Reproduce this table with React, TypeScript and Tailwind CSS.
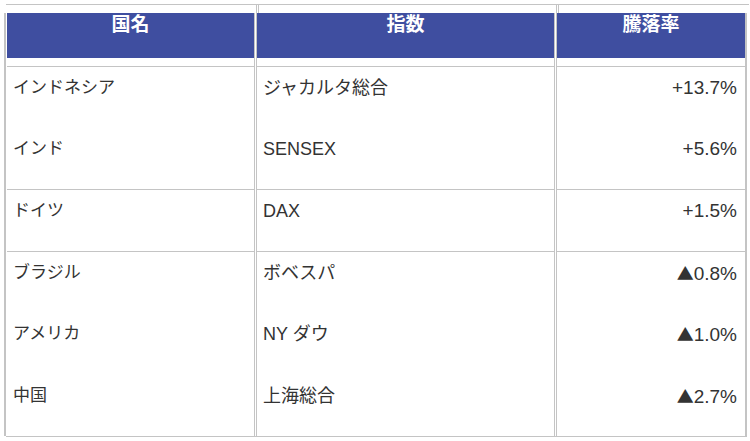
import React from 'react'

const line = 'border-[#c4c4c4]'

type Row = { country: string; index: string; rate: string; top: boolean }

const rows: Row[] = [
    { country: 'インドネシア', index: 'ジャカルタ総合', rate: '+13.7%', top: true },
    { country: 'インド', index: 'SENSEX', rate: '+5.6%', top: false },
    { country: 'ドイツ', index: 'DAX', rate: '+1.5%', top: true },
    { country: 'ブラジル', index: 'ボベスパ', rate: '▲0.8%', top: true },
    { country: 'アメリカ', index: 'NY ダウ', rate: '▲1.0%', top: false },
    { country: '中国', index: '上海総合', rate: '▲2.7%', top: false },
]

function Frame({
    edges = true,
    className = '',
    c1,
    c2,
    c3,
}: {
    edges?: boolean
    className?: string
    c1?: React.ReactNode
    c2?: React.ReactNode
    c3?: React.ReactNode
}) {
    return (
        <div className={`flex ${className}`}>
            <div className={`w-[3px] ${edges ? 'border-l-2 ' + line : ''}`} />
            <div className="w-[247px]">{c1}</div>
            <div className={`w-[3px] border-x ${line}`} />
            <div className="w-[297px]">{c2}</div>
            <div className={`w-[3px] border-x ${line}`} />
            <div className="w-[188px]">{c3}</div>
            <div className={`w-[2px] ${edges ? 'bg-[#c4c4c4]' : ''}`} />
        </div>
    )
}

function Head({ label }: { label: string }) {
    return (
        <div className="h-full bg-[#3f4ea0] pt-px text-center text-[19px] leading-[22px] font-bold text-white">
            {label}
        </div>
    )
}

function Cell({ children, top, className = '' }: { children: React.ReactNode; top: boolean; className?: string }) {
    return (
        <div className={`h-full border-t pt-[9px] leading-[24px] ${top ? line : 'border-transparent'} ${className}`}>
            {children}
        </div>
    )
}

// ▲ comes from the CJK font so it is the wide, full-size triangle
function Rate({ value }: { value: string }) {
    if (value.startsWith('▲')) {
        return (
            <>
                <span className="font-['Noto_Sans_CJK_JP',sans-serif] text-[17px]">▲</span>
                {value.slice(1)}
            </>
        )
    }
    return <>{value}</>
}

export default function App() {
    return (
        <div className="h-[441px] w-[750px] overflow-hidden bg-white pl-[4px] pt-[4px] font-['Liberation_Sans','Noto_Sans_CJK_JP',sans-serif] text-[#333]">
            <div className="w-[743px]">
                {/* top rule */}
                <Frame edges={false} className={`ml-[2px] -mr-[2px] h-[9px] border-t ${line}`} />
                <Frame className="h-[45px]" c1={<Head label="国名" />} c2={<Head label="指数" />} c3={<Head label="騰落率" />} />
                <Frame className="h-[8px]" />
                {rows.map((row, i) => (
                    <Frame
                        key={i}
                        className={i === 2 || i === 5 ? 'h-[62px]' : i === 0 ? 'h-[61px]' : 'h-[61.5px]'}
                        c1={
                            <Cell top={row.top} className="pl-[6px] text-[17px]">
                                {row.country}
                            </Cell>
                        }
                        c2={
                            <Cell top={row.top} className="pl-[6px] text-[18px]">
                                {row.index}
                            </Cell>
                        }
                        c3={
                            <Cell top={row.top} className="pr-[8px] text-right text-[19px]">
                                <Rate value={row.rate} />
                            </Cell>
                        }
                    />
                ))}
                <div className={`ml-[2px] h-[4px] w-[741px] border-t ${line}`} />
            </div>
        </div>
    )
}
